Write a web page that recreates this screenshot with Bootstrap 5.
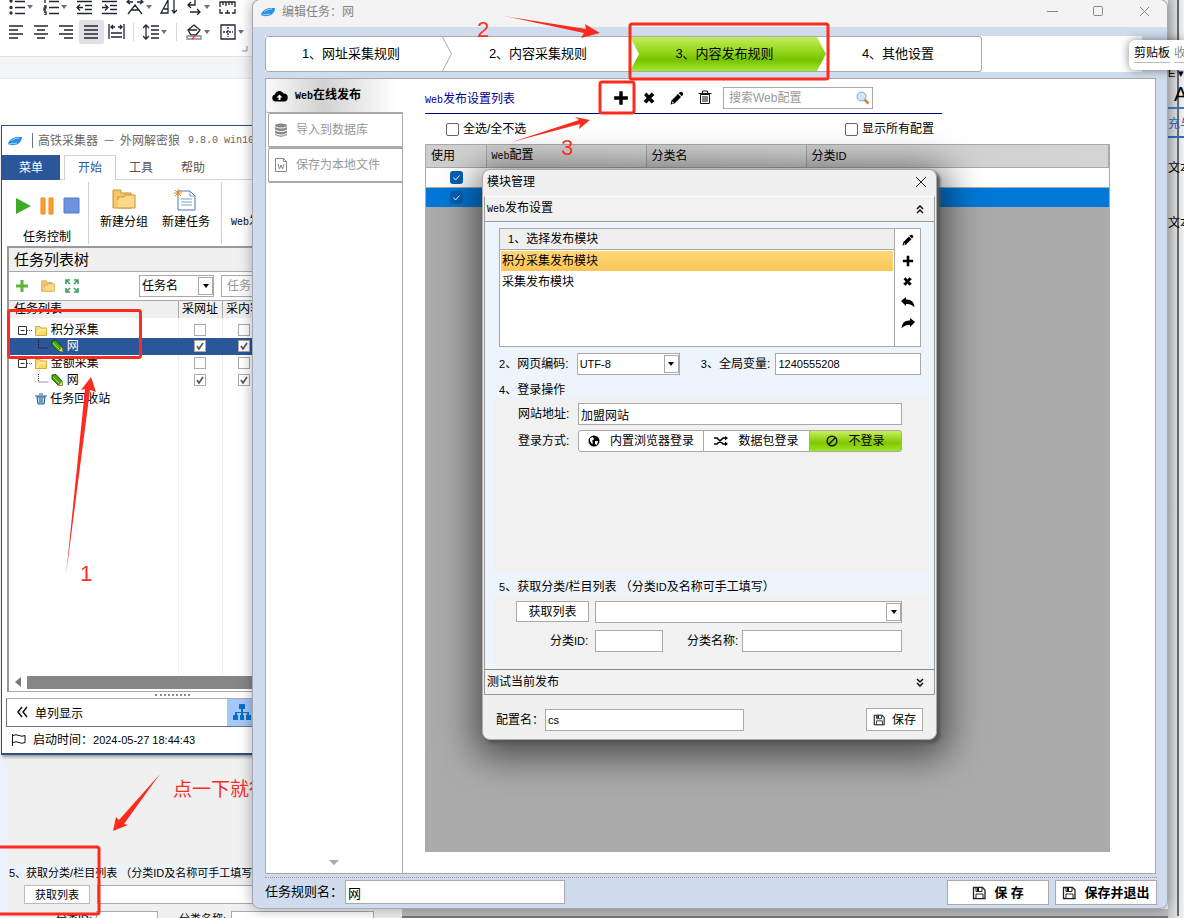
<!DOCTYPE html>
<html lang="zh-CN">
<head>
<meta charset="utf-8">
<meta name="viewport" content="width=device-width, initial-scale=1">
<title>编辑任务：网</title>
<link href="https://cdn.jsdelivr.net/npm/bootstrap@5.3.0/dist/css/bootstrap.min.css" rel="stylesheet">
<style>
:root{--line:#a9a9a9;--red:#fb2c1e;--frame:#d0dced;--navy:#2b579a}
body{font-family:"Liberation Sans","Noto Sans CJK SC",sans-serif;font-size:12px;line-height:16px;color:#000;background:#fff}
button,input,select{font:inherit;color:inherit;border-radius:0}
button{padding:0;border:0;background:none;white-space:nowrap}
svg{display:block;flex:none}
.lat{font-size:11px}
.mon{font-family:"Liberation Mono",monospace;font-size:10px}
.desk{position:relative;height:100vh;overflow:hidden}
.win{position:absolute}
.fld{border:1px solid var(--line);background:#fff;padding:0 2px;height:22px;min-width:0}
.fld:focus{outline:0}
.fld::placeholder{color:#999}
.tx{white-space:nowrap}

/* word processor behind */
.ribbon2{height:57px;background:#fff;border-bottom:1px solid #e2e2e4;width:252px;overflow:hidden}
.strip{height:22px;background:#f4f5f8;border-bottom:1px solid #ececec}
.irow{height:24px;padding-left:4px}
.irow button{width:25px;height:24px;display:flex;align-items:center;justify-content:center;flex:none}
.irow button.dd{width:34px;gap:2px}
.irow button.on{background:#dfe1e6;border-radius:2px}
.irow .sep{width:1px;height:18px;background:#d5d7da;margin:0 4px}
.irow svg{fill:none;stroke:#222633;stroke-width:1.3}
.irow svg.ca{fill:#6c6f86;stroke:none}
.side{right:0;top:0;bottom:0;width:16px;background:linear-gradient(90deg,#c4c7cb,#dfe1e4 60%,#f0f1f2);overflow:hidden}
.side .rule{position:absolute;left:9px;top:0;bottom:2px;width:2px;background:#666a70}
.lower{left:0;right:0;top:756px;bottom:0;background:#f0f0f0;border-left:5px solid #eaf2fb;font-size:11px}
.lower .note{font-size:19px;line-height:24px;color:var(--red);padding:22px 0 0 168px}
.lower .band{background:linear-gradient(#ebf3fc,#f0f0f0)}
.tray{left:402px;right:7px;bottom:0;height:9px;background:#b9bbbe;border-bottom:2px solid #777}

/* task window */
.task{left:1px;top:125px;width:300px;height:630px;background:#fff;border:1px solid #30507f;border-bottom-width:2px;box-shadow:1px 2px 3px #999}
.task .cap{height:29px;color:#666;padding-left:6px}
.tabs{height:25px;color:#555;border-bottom:1px solid #d4d4d4}
.tabs button{height:25px}
.tabs .m{width:58px;background:var(--navy);color:#fff}
.tabs .a{width:52px;margin-left:4px;border:1px solid #cfcfcf;border-bottom:0;background:#fff;color:var(--navy)}
.rib{height:66px}
.rib .g{border-right:1px solid #d0d0d0;height:62px;margin-top:2px}
.tree{margin-left:5px;border-left:2px solid #999;border-top:2px solid #999}
.tree .hd{height:24px;background:#f0f0f0;border-bottom:1px solid #aaa;font-size:15px;padding-left:5px}
.tree .tb{height:28px;padding-left:6px}
.tree table{width:290px;table-layout:fixed;border-collapse:collapse}
.tree th{height:17px;padding:0;background:#efefef;border-right:1px solid #aaa;border-top:1px solid #aaa;font-weight:400;white-space:nowrap;text-align:center}
.tree th:first-child{text-align:left;padding-left:5px}
.tree td{height:17px;padding:0;border-right:1px solid #f0f0f0;vertical-align:middle}
.tree td svg{display:inline-block;vertical-align:-2px}
.tree td input{appearance:none;width:12px;height:12px;border:1px solid #aaa;background:#fff;display:block;margin:0 auto}
.tree td input:checked{background:#fff url("data:image/svg+xml,%3Csvg xmlns='http://www.w3.org/2000/svg' viewBox='0 0 10 10'%3E%3Cpath d='M2 5l2 3 4-6' fill='none' stroke='%23555' stroke-width='1.6'/%3E%3C/svg%3E")}
.tree tr.sel{background:var(--navy);color:#fff}
.tree tr.sel td{border-color:var(--navy)}
.tree .top td{padding-top:4px}
.combo{position:relative}
.combo select{appearance:none;width:100%}
.combo .ar{position:absolute;right:1px;top:2px;bottom:2px;width:15px;border:1px solid var(--line);background:#fff;pointer-events:none;display:flex;align-items:center;justify-content:center}

/* editor window */
.edit{left:252px;right:16px;top:-1px;bottom:9px;background:var(--frame);border:1px solid #a4aab3;border-radius:8px;box-shadow:0 0 14px #0005;display:flex;flex-direction:column;padding-bottom:4px}
.edit .cap{height:27px;background:#f3f3f3;color:#858585;border-radius:8px 8px 0 0;padding:0 17px 4px 8px;flex:none}
.wizwrap{margin:9px 25px 6px 12px;background:#fff;flex:none}
.wiz{width:717px;height:36px;border:1px solid var(--line);border-radius:3px;font-size:13px}
.wiz button{position:relative;flex:none}
.wiz .tip{position:absolute;right:-10px;top:0;z-index:2}
.wiz .cur::before{content:"";position:absolute;z-index:0;left:0;right:-9px;top:0;bottom:0;background:linear-gradient(#c4ee5c,#8fd414 48%,#76c200 68%,#a4e830);clip-path:polygon(0 0,calc(100% - 9px) 0,100% 50%,calc(100% - 9px) 100%,0 100%,9px 50%)}
.wiz .cur span{position:relative}
.pane{flex:1;margin:0 11px 0 12px;border:1px solid var(--line);background:#fff;min-height:0}
.nav1{width:137px;border-right:1px solid var(--line);flex:none}
.nav1 button{height:35px;margin-left:2px;border:1px solid var(--line);border-right:0;width:134px;color:#999;display:flex;align-items:center;gap:9px;padding-left:6px;font-size:12px;border-bottom-width:2px;border-radius:2px 0 0 2px}
.nav1 .first{height:34px;margin:0;width:137px;border:0;border-bottom:1px solid var(--line);color:#000;font-weight:700;background:linear-gradient(90deg,#fafafa,#d2d2d2 42%,#fff 95%)}
.head{width:517px;height:35px;border-bottom:1px solid #000072;color:#000090;padding-top:3px}
.head button{width:28px;height:28px;display:flex;align-items:center;justify-content:center}
.chk{width:13px;height:13px;border:1px solid #666;border-radius:2px;appearance:none;background:#fff;margin:0}
.grid{width:685px;background:#ababab;flex:1;margin-bottom:21px;border-left:1px solid #aaa}
.grid table{width:683px;table-layout:fixed;border-collapse:collapse}
.grid th{height:23px;padding:0 0 0 5px;background:linear-gradient(90deg,#cdcdcd,#d4d4d4);font-weight:400;border:1px solid var(--line);border-left:0}
.grid td{height:20px;padding:0;border-bottom:1px solid var(--line)}
.grid td input{appearance:none;width:13px;height:13px;border-radius:3px;display:block;margin:0 auto;background:#0560b6 url("data:image/svg+xml,%3Csvg xmlns='http://www.w3.org/2000/svg' viewBox='0 0 13 13'%3E%3Cpath d='M3.500 6.500l2 2.500 4-4.500' fill='none' stroke='%23fff' stroke-width='1'/%3E%3C/svg%3E")}
.foot{border-top:1px dotted #999;margin:3px 10px 0 12px;padding-top:2px;height:27px;flex:none;font-size:13px}
.foot button{width:102px;height:25px;border:1px solid var(--line);background:#fff;font-weight:700;display:flex;align-items:center;justify-content:center;gap:8px}

/* module dialog */
.dlg{left:482px;top:169px;width:455px;border:1px solid #aaa;border-radius:8px;background:#f0f0f0;box-shadow:3px 3px 3px #555,2px 8px 36px 10px #0008;padding-bottom:8px}
.dlg .acc{height:26px;margin:0 1px;padding:0 10px 0 2px;border:1px solid #999;border-top-color:#fff;background:#f2f2f2;width:451px;display:flex;align-items:center;justify-content:space-between;text-align:left}
.dlg .bd{margin:0 1px;border-left:1px solid #999;border-right:1px solid #999;background:#edf4fc;padding:6px 6px 6px 9px;height:447px}
.lst{height:119px;margin:0 7px 0 5px;border:1px solid var(--line);background:#fff;display:flex}
.lst .hd{height:21px;background:#efefef;border-bottom:1px solid var(--line);padding:2px 8px}
.lst .it{height:21px;padding:2px 1px;margin:0 1px;display:block;width:calc(100% - 2px);text-align:left}
.lst .it.on{background:linear-gradient(#ffd778,#fcc556);margin-top:1px;height:20px;padding-top:1px}
.lst .tools{width:26px;border-left:1px solid var(--line)}
.lst .tools button{width:25px;height:21px;display:flex;align-items:center;justify-content:center}
.box{background:#f1f1f1;border-radius:3px}
.seg button{height:22px;border:1px solid var(--line);background:#fff;display:flex;align-items:center;justify-content:center;gap:10px;margin-left:-1px}
.seg button:first-child{margin-left:0;border-radius:3px 0 0 3px}
.seg button.on{background:linear-gradient(#c8f060,#80c800 60%,#a0e428);border-radius:0 3px 3px 0}
.pill{left:1129px;top:40px;right:0;height:30px;background:#fff;border-radius:6px 0 0 6px;box-shadow:0 0 10px #0007;overflow:hidden;padding:3px 0 0 5px}
.pill span{border-bottom:1px solid #bbb;height:20px;line-height:20px}
.marks{position:absolute;left:0;top:0;pointer-events:none;fill:var(--red);font-size:22px}
.marks rect{fill:none;stroke:var(--red);stroke-width:3}
</style>
<script src="https://cdn.jsdelivr.net/npm/bootstrap@5.3.0/dist/js/bootstrap.bundle.min.js"></script>
</head>
<body>
<svg width="0" height="0" class="position-absolute" aria-hidden="true">
<defs>
<symbol id="ca" viewBox="0 0 6 4"><path d="M0 0h6L3 4z"/></symbol>
<symbol id="plus" viewBox="0 0 14 14"><path d="M5.500 1h3v4.500H13v3H8.500V13h-3V8.500H1v-3h4.500z"/></symbol>
<symbol id="cross" viewBox="0 0 14 14"><path d="M2 4l2.500-2.500L7 4.300l2.500-2.800L12.500 4 9.300 7l3.200 3-3 2.500L7 9.700l-2.500 2.800L1.500 10l3.200-3z"/></symbol>
<symbol id="pen" viewBox="0 0 14 14"><path d="M9.500 1.500Q11 0 12.500 1.500q1.500 1.500 0 3L11.700 5.300 8.700 2.300zM8 3l3 3-6.500 6.500L.5 13.500l1-4z"/><path d="M2.300 10.200l1.700 1.700-1.900.5z" fill="#fff"/></symbol>
<symbol id="save" viewBox="0 0 14 14"><path d="M1.500 1.500h9l2.500 2.500v8.500H1.500z" fill="#fff" stroke="#222" stroke-width="1.300"/><path d="M4 1.500h6v4H4zM4 8h7v4.500H4z" fill="#fff" stroke="#222"/><path d="M5 2h2v3H5z" fill="#111"/></symbol>
<symbol id="bird" viewBox="0 0 14 10"><path d="M0 8C1 4 4 2 8 1l6 0c0 2-1 5-4 7-3 1-7 2-10 0z" fill="#2a8fe0"/><path d="M3 5c2-2 5-3 8-3M1 8l8-1" stroke="#9ad6ff" fill="none"/></symbol>
<symbol id="fold" viewBox="0 0 24 20"><path d="M1 1h8v3h10v15H1z" fill="#f5c766" stroke="#c89234"/><path d="M6 11V8h6l1-2h10v13H6" fill="#fdd98a" stroke="#c89234"/></symbol>
<symbol id="fs" viewBox="0 0 12 11"><path d="M.5 10.500v-9H5l1 1.500h5.500v7.500z" fill="#f8dc6a" stroke="#d9a93b"/><path d="M2 10l2-5h7" stroke="#fff6c4" fill="none"/></symbol>
<symbol id="crayon" viewBox="0 0 12 12"><path d="M1 1l4-.5L11 7l.5 4.500L7 11 1 5z" fill="#45a516" stroke="#22590a"/><path d="M2 3l6 6" stroke="#a9e56b"/><path d="M8 11l3-4 .7 4.700z" fill="#f3c977"/></symbol>
<symbol id="chev" viewBox="0 0 8 9"><path d="M1 4l3-3 3 3M1 8l3-3 3 3" fill="none" stroke="#111" stroke-width="1.500"/></symbol>
</defs>
</svg>

<main class="desk">
  <!-- document editor -->
  <div class="ribbon2">
    <div class="irow d-flex" style="margin-top:-5px">
      <button class="dd" aria-label="项目符号"><svg width="16" height="16"><path d="M6 2.500h10M6 8.500h10M6 14.500h10"/><circle cx="2" cy="2" r="1"/><circle cx="2" cy="8.500" r="1"/><circle cx="2" cy="14" r="1"/></svg><svg class="ca" width="6" height="4"><use href="#ca"/></svg></button>
      <button class="dd" aria-label="编号"><svg width="16" height="16"><path d="M6 2.500h10M6 8.500h10M6 14.500h10M2 0v4M1 7h2v2H1v2h2M1 13h2v3H1"/></svg><svg class="ca" width="6" height="4"><use href="#ca"/></svg></button>
      <button aria-label="减少缩进"><svg width="17" height="16"><path d="M1 2.500h15M9 6.500h7M9 10.500h7M1 14.500h15M7 8.500H1m3-3l-3 3 3 3"/></svg></button>
      <button aria-label="增加缩进"><svg width="17" height="16"><path d="M1 2.500h15M9 6.500h7M9 10.500h7M1 14.500h15M1 8.500h6m-3-3l3 3-3 3"/></svg></button>
      <button class="dd" aria-label="中文版式"><svg width="18" height="16"><path d="M2 15L9 6l7 9M5 11h8M1 3h6M4 0L1 3l3 2M11 3h6m-3-3l3 3-3 2"/></svg><svg class="ca" width="6" height="4"><use href="#ca"/></svg></button>
      <button aria-label="排序"><svg width="17" height="16"><path d="M1 14L8 1v13zM4 10h4M14 1v13m-2-3l2 3 3-3"/></svg></button>
      <button class="dd" aria-label="换行"><svg width="16" height="16"><path d="M9 1v5H2m3-3L2 6l3 3M4 13h10m-3-3l3 3-3 3"/></svg><svg class="ca" width="6" height="4"><use href="#ca"/></svg></button>
      <button aria-label="标尺"><svg width="17" height="16"><path d="M1 8V3h15v5M4 3v3M7 3v4M10 3v3M13 3v3M1 10v4h3M13 14h3v-4M6 14h5M8.500 11v3"/></svg></button>
    </div>
    <div class="irow d-flex align-items-center" style="margin-top:1px">
      <button aria-label="左对齐"><svg width="15" height="14"><path d="M0 1h14M0 5h9M0 9h14M0 13h9"/></svg></button>
      <button aria-label="居中"><svg width="15" height="14"><path d="M0 1h14M3 5h8M0 9h14M3 13h8"/></svg></button>
      <button aria-label="右对齐"><svg width="15" height="14"><path d="M0 1h14M5 5h9M0 9h14M5 13h9"/></svg></button>
      <button class="on" aria-label="两端对齐"><svg width="15" height="14"><path d="M0 1h14M0 5h14M0 9h14M0 13h14"/></svg></button>
      <button aria-label="分散对齐"><svg width="17" height="16"><path d="M1 0v15M16 0v15M3 9h11M3 13h11M3 3h4M10 3h4M5 1L3 3l2 2M12 1l2 2-2 2"/></svg></button>
      <span class="sep"></span>
      <button class="dd" aria-label="行距"><svg width="16" height="16"><path d="M3 1v14M0 4l3-3 3 3M0 12l3 3 3-3M8 2h8M8 6h8M8 10h8M8 14h8"/></svg><svg class="ca" width="6" height="4"><use href="#ca"/></svg></button>
      <span class="sep"></span>
      <button class="dd" aria-label="底纹"><svg width="16" height="16"><path d="M8 1l6 5-4 5H5L2 6zM2 6h9"/><path d="M1 12h14v3H1z" stroke="#888"/><path d="M6 15l4-4" stroke="#e33"/></svg><svg class="ca" width="6" height="4"><use href="#ca"/></svg></button>
      <button class="dd" aria-label="边框"><svg width="16" height="16"><path d="M1 1h14v14H1z"/><path d="M8 3v10M3 8h10" stroke-dasharray="2 1"/></svg><svg class="ca" width="6" height="4"><use href="#ca"/></svg></button>
    </div>
    <svg class="ms-auto me-1" width="6" height="8"><path d="M5 2v5H0" fill="none" stroke="#888ba8"/></svg>
  </div>
  <div class="strip"></div>

  <!-- enlarged detail at the bottom -->
  <section class="win lower">
    <div class="note">点一下就行</div>
    <div style="height:63px"></div>
    <div class="band tx ps-1">5、获取分类/栏目列表 （分类ID及名称可手工填写）</div>
    <div class="d-flex" style="margin:4px 0 7px 19px;gap:7px"><button style="width:66px;height:19px;border:1px solid #bbb;background:#fff">获取列表</button><input class="fld" style="width:340px;height:19px" aria-label="列表"></div>
    <div class="d-flex" style="margin-left:51px"><label for="q1" class="tx" style="width:40px">分类ID:</label><input id="q1" class="fld" style="width:62px;margin-right:21px"><label for="q2" class="tx" style="width:52px">分类名称:</label><input id="q2" class="fld" style="width:143px"></div>
  </section>
  <div class="win tray"></div>
  <aside class="win side">
    <span class="rule"></span>
    <div class="position-relative tx" style="padding-top:65px"><span class="lat">E ▾</span>
      <div style="font-size:20px;line-height:26px;padding-left:6px;border-bottom:2px solid #3b76c4">A</div>
      <div class="mt-1" style="color:#2b6bc0;border-bottom:2px solid #2b6bc0;height:25px;padding-top:3px">充与</div>
      <div style="margin-top:22px">文本</div>
      <div style="margin-top:39px">文本</div>
    </div>
  </aside>

  <!-- task window -->
  <section class="win task">
    <div class="cap d-flex align-items-center tx"><svg width="14" height="10"><use href="#bird"/></svg><span class="border-start border-secondary" style="height:15px;margin:0 5px 0 10px"></span>高铁采集器<span style="width:22px;text-align:center">－</span>外网解密狼<span class="mon ps-2" style="white-space:pre">9.8.0 win10</span></div>
    <div class="tabs d-flex"><button class="m">菜单</button><button class="a">开始</button><button style="width:50px">工具</button><button style="width:54px">帮助</button></div>
    <div class="rib d-flex">
      <div class="g d-flex flex-column justify-content-between align-items-center" style="width:87px;padding:15px 0 0 4px"><span class="d-flex gap-2 align-items-center"><svg width="17" height="18"><path d="M1 1l15 8-15 8z" fill="#3fac29"/></svg><svg width="15" height="18"><path d="M1 1h4v16H1zM9 1h4v16H9z" fill="#ffa02e" stroke="#e58a1b"/></svg><svg width="17" height="18"><path d="M1 1h15v15H1z" fill="#6d93dc" stroke="#547bc9"/></svg></span><span style="line-height:14px">任务控制</span></div>
      <div class="g d-flex" style="width:133px;padding:7px 4px 0"><button class="d-flex flex-column align-items-center" style="width:63px;gap:5px"><svg width="24" height="20"><use href="#fold"/></svg>新建分组</button><button class="d-flex flex-column align-items-center" style="width:63px;gap:3px"><svg width="24" height="22"><path d="M4 2h12l5 5v14H4z" fill="#fff" stroke="#4a78bd"/><path d="M16 2v5h5M7 10h11M7 13h11M7 16h11" fill="none" stroke="#7d9fd0"/><path d="M4 0v8M0 4h8M1 1l6 6M7 1L1 7" stroke="#e78b28"/></svg>新建任务</button></div>
      <div class="tx" style="padding:33px 0 0 9px"><span class="mon">Web</span>发布</div>
    </div>
    <div class="tree">
      <div class="hd d-flex align-items-center tx">任务列表树</div>
      <div class="tb d-flex align-items-center">
        <button aria-label="添加" class="me-2"><svg width="14" height="14" fill="#5cb535"><use href="#plus"/></svg></button>
        <button aria-label="新建分组" class="ms-1"><svg width="14" height="12"><use href="#fold"/></svg></button>
        <button aria-label="展开" style="margin-left:10px"><svg width="14" height="14"><path d="M1 5V1h4M9 1h4v4M13 9v4H9M5 13H1V9M1 1l4 4M13 1L9 5M13 13L9 9M1 13l4-4" fill="none" stroke="#3da05c" stroke-width="1.600"/></svg></button>
        <span class="combo" style="width:75px;margin-left:60px"><select class="fld" aria-label="搜索字段"><option>任务名</option></select><span class="ar"><svg width="6" height="4"><use href="#ca"/></svg></span></span>
        <input class="fld" style="width:60px;margin-left:7px;padding-left:5px" placeholder="任务名" aria-label="任务名">
      </div>
      <table>
        <colgroup><col style="width:169px"><col style="width:44px"><col style="width:44px"><col></colgroup>
        <thead><tr><th>任务列表</th><th>采网址</th><th>采内容</th><th></th></tr></thead>
        <tbody>
        <tr class="top"><td style="padding-left:9px" class="tx"><svg width="14" height="11"><path d="M.5 1.500h8v8h-8zM2.500 5.500h4" fill="none" stroke="#333"/><path d="M9 5.500h5" stroke="#555" stroke-dasharray="1 1"/></svg> <svg width="12" height="11"><use href="#fs"/></svg> 积分采集</td><td><input type="checkbox" aria-label="采网址"></td><td><input type="checkbox" aria-label="采内容"></td><td></td></tr>
        <tr class="sel"><td style="padding-left:29px" class="tx"><svg width="10" height="12"><path d="M.5 0v8h9" fill="none" stroke="#111" stroke-dasharray="1 1"/></svg> <svg width="12" height="12"><use href="#crayon"/></svg> 网</td><td><input type="checkbox" checked aria-label="采网址"></td><td><input type="checkbox" checked aria-label="采内容"></td><td></td></tr>
        <tr><td style="padding-left:9px" class="tx"><svg width="14" height="11"><path d="M.5 1.500h8v8h-8zM2.500 5.500h4" fill="none" stroke="#333"/><path d="M9 5.500h5" stroke="#555" stroke-dasharray="1 1"/></svg> <svg width="12" height="11"><use href="#fs"/></svg> 金额采集</td><td><input type="checkbox" aria-label="采网址"></td><td><input type="checkbox" aria-label="采内容"></td><td></td></tr>
        <tr><td style="padding-left:29px" class="tx"><svg width="10" height="12"><path d="M.5 0v8h9" fill="none" stroke="#333" stroke-dasharray="1 1"/></svg> <svg width="12" height="12"><use href="#crayon"/></svg> 网</td><td><input type="checkbox" checked aria-label="采网址"></td><td><input type="checkbox" checked aria-label="采内容"></td><td></td></tr>
        <tr><td style="padding:2px 0 0 26px" class="tx"><svg width="12" height="12"><path d="M2 4h8l-1 7H3z" fill="#bfe3ff" stroke="#14567f"/><path d="M0 3h12M4 1h4M5 5v5M7 5v5" stroke="#14567f" fill="none"/></svg> 任务回收站</td><td></td><td></td><td></td></tr>
        <tr style="height:267px"><td></td><td></td><td></td><td></td></tr>
        </tbody>
      </table>
      <div class="d-flex align-items-center" style="height:18px;padding-left:6px;gap:6px;border-bottom:1px solid #aaa"><svg width="6" height="10"><path d="M6 0v10L0 5z" fill="#777"/></svg><div class="flex-fill" style="height:13px;background:#868686"></div></div>
    </div>
    <div class="ms-1" style="height:7px;border-bottom:1px solid #aaa;padding:2px 0 0 149px"><div style="width:35px;border-top:2px dotted #888"></div></div>
    <div class="ms-1 d-flex align-items-center border-start border-secondary" style="height:28px;border-bottom:1px solid #aaa;padding-left:10px;gap:7px"><svg width="11" height="12"><path d="M5 1L1 6l4 5M10 1L6 6l4 5" fill="none" stroke="#111" stroke-width="1.500"/></svg><span class="pt-1">单列显示</span><button aria-label="树形显示" class="d-flex align-items-center" style="margin-left:137px;width:50px;height:27px;background:#a5c8fb;padding-left:6px"><svg width="18" height="17" fill="#0d6fc2"><path d="M6 0h6v5h-2v3h6v3h2v5h-5v-5h1V9h-4v2h1v5H7v-5h1V9H4v2h1v5H0v-5h2V8h6V5H6z"/></svg></button></div>
    <div class="d-flex align-items-center tx" style="height:26px;padding-left:9px"><svg width="16" height="12"><path d="M1.500 0v12M2 1.500q3-1.500 6 0t6 0v7q-3 1.500-6 0t-6 0" fill="none" stroke="#111"/></svg><span style="margin-left:6px">启动时间：</span><span class="lat">2024-05-27 18:44:43</span></div>
  </section>

  <!-- task editor -->
  <section class="win edit">
    <div class="cap d-flex align-items-center"><svg width="14" height="10"><use href="#bird"/></svg><span class="tx" style="margin-left:7px">编辑任务：网</span>
      <span class="ms-auto d-flex" style="gap:35px"><button aria-label="最小化"><svg width="11" height="11"><path d="M0 5.500h11" stroke="#888"/></svg></button><button aria-label="最大化"><svg width="11" height="11"><rect x=".5" y=".5" width="9" height="9" rx="1" fill="none" stroke="#888"/></svg></button><button aria-label="关闭"><svg width="11" height="11"><path d="M1 1l9 9M10 1l-9 9" stroke="#888"/></svg></button></span></div>
    <div class="wizwrap"><div class="wiz d-flex">
      <button style="width:177px;padding-right:7px">1、网址采集规则<svg class="tip" width="11" height="34"><path d="M.5 0l9 17-9 17" fill="#fff" stroke="#aaa"/></svg></button>
      <button style="width:187px;padding-left:3px">2、内容采集规则</button>
      <button class="cur" style="width:187px;padding-left:2px"><span>3、内容发布规则</span></button>
      <button style="width:162px">4、其他设置</button>
    </div></div>
    <div class="pane d-flex">
      <nav class="nav1 d-flex flex-column">
        <button class="first"><svg width="16" height="12"><path d="M3.500 11.500A3.500 3.500 0 0 1 3 4.600 4.500 4.500 0 0 1 11.500 3.500 4 4 0 0 1 12 11.500z"/><path d="M7.500 4.500l3 3h-2V10h-2V7.500h-2z" fill="#fff"/></svg><span style="margin-left:-2px"><span class="mon">Web</span>在线发布</span></button>
        <button><svg width="12" height="14" fill="#888"><ellipse cx="6" cy="2.500" rx="6" ry="2"/><path d="M0 4q6 3 12 0v2.500q-6 3-12 0zM0 7.500q6 3 12 0V10q-6 3-12 0zM0 11q6 3 12 0v1q-6 3.500-12 0z"/></svg>导入到数据库</button>
        <button><svg width="12" height="14"><path d="M.5.500h8l3 3v10H.5zM8.500.500v3h3M3 6l1.500 5L6 7l1.500 4L9 6" fill="none" stroke="#888"/></svg>保存为本地文件</button>
        <svg class="mt-auto mb-2 mx-auto" width="10" height="5"><path d="M0 0h10L5 5z" fill="#aaa"/></svg>
      </nav>
      <div class="flex-fill d-flex flex-column" style="padding-left:22px">
        <div class="head d-flex align-items-center"><span class="tx pt-1" style="width:182px"><span class="mon">Web</span>发布设置列表</span>
          <button aria-label="添加"><svg width="16" height="16"><use href="#plus"/></svg></button><button aria-label="删除"><svg width="14" height="14"><use href="#cross"/></svg></button><button aria-label="编辑"><svg width="14" height="14"><use href="#pen"/></svg></button><button aria-label="清空"><svg width="14" height="15"><path d="M2.500 4.500h9v9h-9zM.5 3.500h13M4.500 3V1h5v2M5 6v6M7 6v6M9 6v6" fill="none" stroke="#111"/></svg></button>
          <span class="position-relative ms-1"><input class="fld" style="width:150px;padding-left:5px" placeholder="搜索Web配置" aria-label="搜索Web配置"><svg class="position-absolute" style="right:3px;top:4px" width="14" height="14"><path d="M8.500 8.500l4 4" stroke="#c58a3a" stroke-width="2.500"/><circle cx="5.500" cy="5.500" r="4.500" fill="#cfe5fb" stroke="#7ea9dc"/></svg></span>
        </div>
        <div class="d-flex align-items-center" style="height:30px;width:509px;padding-left:21px"><input type="checkbox" class="chk" id="c1"><label for="c1" class="ms-1">全选/全不选</label><input type="checkbox" class="chk ms-auto" id="c2"><label for="c2" class="ms-1">显示所有配置</label></div>
        <div class="grid">
          <table><colgroup><col style="width:60px"><col style="width:160px"><col style="width:160px"><col></colgroup>
          <thead><tr><th>使用</th><th><span class="mon">Web</span>配置</th><th>分类名</th><th>分类<span class="lat">ID</span></th></tr></thead>
          <tbody><tr style="background:#fff"><td><input type="checkbox" checked aria-label="使用"></td><td></td><td></td><td></td></tr><tr style="background:#0078d7"><td><input type="checkbox" checked aria-label="使用"></td><td></td><td></td><td></td></tr></tbody></table>
        </div>
      </div>
    </div>
    <div class="foot d-flex align-items-start"><label for="rn" class="tx pt-1" style="width:80px">任务规则名：</label><input id="rn" class="fld" style="width:220px;height:24px" value="网"><span class="ms-auto"></span><button><svg width="14" height="14"><use href="#save"/></svg>保 存</button><button style="margin-left:6px"><svg width="14" height="14"><use href="#save"/></svg>保存并退出</button></div>
  </section>

  <!-- module dialog -->
  <section class="win dlg">
    <div class="d-flex align-items-center justify-content-between" style="height:26px;padding:0 9px 2px 4px"><span>模块管理</span><button aria-label="关闭"><svg width="12" height="12"><path d="M1 1l10 10M11 1L1 11" stroke="#222"/></svg></button></div>
    <button class="acc"><span><span class="mon">Web</span>发布设置</span><svg width="8" height="9"><use href="#chev"/></svg></button>
    <div class="bd">
      <div class="lst"><div class="flex-fill"><div class="hd"><span class="lat">1</span>、选择发布模块</div><button class="it on">积分采集发布模块</button><button class="it">采集发布模块</button></div>
        <div class="tools"><button aria-label="编辑"><svg width="12" height="12"><use href="#pen"/></svg></button><button aria-label="添加"><svg width="12" height="12"><use href="#plus"/></svg></button><button aria-label="删除"><svg width="11" height="11"><use href="#cross"/></svg></button><button aria-label="撤销"><svg width="14" height="11"><path d="M0 4l5-4v2.500q8-.5 8.500 8-3-4-8.500-3.500V9z"/></svg></button><button aria-label="重做"><svg width="14" height="11"><path d="M14 4L9 0v2.500Q1 2 .5 10.500 3.500 6.500 9 7v2z"/></svg></button></div></div>
      <div class="d-flex align-items-center" style="margin:6px 7px 6px 5px"><label for="enc" class="tx" style="width:79px"><span class="lat">2</span>、网页编码:</label><span class="combo" style="width:105px"><select id="enc" class="fld lat"><option>UTF-8</option></select><span class="ar"><svg width="6" height="4"><use href="#ca"/></svg></span></span><label for="gv" class="tx" style="width:76px;margin-left:21px"><span class="lat">3</span>、全局变量:</label><input id="gv" class="fld flex-fill lat" value="1240555208"></div>
      <div style="padding:1px 0 0 5px"><span class="lat">4</span>、登录操作</div>
      <div class="box" style="height:174px;padding:5px 26px 0 24px">
        <div class="d-flex align-items-center"><label for="url" style="width:60px">网站地址:</label><input id="url" class="fld flex-fill" value="加盟网站"></div>
        <div class="d-flex align-items-center" style="margin-top:5px"><span style="width:60px">登录方式:</span><div class="seg d-flex flex-fill"><button style="width:126px"><svg width="12" height="12"><circle cx="6" cy="6" r="5.500"/><path d="M2 3l3-1 1 2-2 2 1 2-1 1-2-3zM7 6l3 0-1 4-2-1z" fill="#fff"/></svg>内置浏览器登录</button><button style="width:107px"><svg width="14" height="10"><path d="M0 2h3l6 6h3M0 8h3l6-6h3" fill="none" stroke="#000" stroke-width="1.600"/><path d="M11 0l3 2-3 2.500zM11 5.500L14 8l-3 2z"/></svg>数据包登录</button><button class="on flex-fill"><svg width="12" height="12"><circle cx="6" cy="6" r="4.800" fill="none" stroke="#111" stroke-width="1.500"/><path d="M9 3L3 9" stroke="#111" stroke-width="1.500"/></svg>不登录</button></div></div>
      </div>
      <div class="tx" style="padding:7px 0 0 5px"><span class="lat">5</span>、获取分类/栏目列表 （分类<span class="lat">ID</span>及名称可手工填写）</div>
      <div class="box" style="height:71px;padding:6px 26px 0 22px">
        <div class="d-flex"><button style="width:73px;height:21px;border:1px solid var(--line);background:#fff;margin-right:6px">获取列表</button><span class="combo flex-fill"><select class="fld" aria-label="分类列表"></select><span class="ar" style="height:18px"><svg width="6" height="4"><use href="#ca"/></svg></span></span></div>
        <div class="d-flex align-items-center" style="margin-top:7px;padding-left:34px"><label for="cid" class="tx" style="width:45px">分类<span class="lat">ID</span>:</label><input id="cid" class="fld" style="width:69px"><label for="cn" class="tx" style="margin-left:24px;width:56px">分类名称:</label><input id="cn" class="fld flex-fill"></div>
      </div>
    </div>
    <button class="acc" style="border-top-color:#888"><span>测试当前发布</span><svg width="8" height="9" style="transform:rotate(180deg)"><use href="#chev"/></svg></button>
    <div class="d-flex align-items-center" style="padding:13px 13px 0 13px"><label for="cfg" style="width:49px">配置名：</label><input id="cfg" class="fld lat" style="width:199px" value="cs" autofocus><button class="ms-auto d-flex align-items-center justify-content-center" style="width:57px;height:23px;border:1px solid var(--line);background:#fff;gap:7px"><svg width="12" height="12"><use href="#save"/></svg>保存</button></div>
  </section>

  <div class="win pill d-flex gap-1"><span class="tx">剪贴板</span><span class="tx text-black-50">收藏</span></div>

  <svg class="marks" width="840" height="918" aria-hidden="true">
    <rect x="8.500" y="310.500" width="132" height="47" rx="2"/><rect x="630" y="24" width="198" height="55" rx="2"/><rect x="600" y="82" width="34" height="31" rx="2"/><rect x="-2" y="847" width="101" height="67" rx="2"/>
    <path d="M66 575L85 389l-4 1 10-13 5 15-6-2z"/><path d="M504 16l82 13-1-5 15 9-19 5 3-5z"/><path d="M512 142l67-22-4-3 15 3-11 9 1-5z"/><path d="M160 774l-36 50 4 1-15 6 3-14 3 3z"/>
    <text x="80" y="581">1</text><text x="477" y="37">2</text><text x="561" y="155">3</text>
  </svg>
</main>
</body>
</html>
